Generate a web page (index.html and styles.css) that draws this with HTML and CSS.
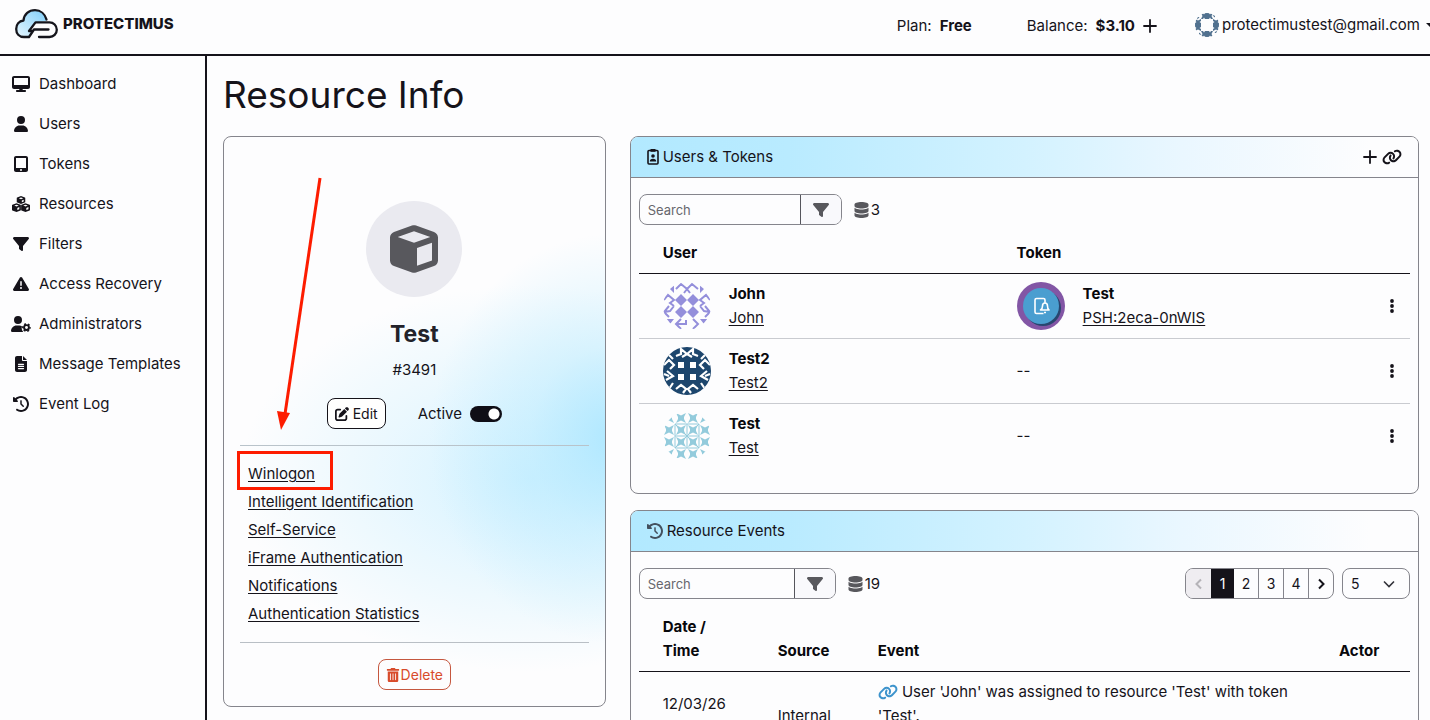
FILE: index.html
```html
<!DOCTYPE html>
<html lang="en">
<head>
<meta charset="utf-8">
<title>Resource Info</title>
<meta name="viewport" content="width=device-width, initial-scale=1">
<link rel="stylesheet" href="styles.css">
</head>
<body>
<svg class="sprite" aria-hidden="true">
  <symbol id="i-desktop" viewBox="0 0 576 512"><path d="M64 0C28.700 0 0 28.700 0 64V352c0 35.300 28.700 64 64 64H240l-10.700 32H160c-17.700 0-32 14.300-32 32s14.300 32 32 32H416c17.700 0 32-14.300 32-32s-14.300-32-32-32H346.700L336 416H512c35.300 0 64-28.700 64-64V64c0-35.300-28.700-64-64-64H64zM512 64V288H64V64H512z"/></symbol>
  <symbol id="i-user" viewBox="0 0 448 512"><path d="M224 256A128 128 0 1 0 224 0a128 128 0 1 0 0 256zm-45.700 48C79.800 304 0 383.800 0 482.300C0 498.700 13.300 512 29.700 512H418.300c16.400 0 29.700-13.300 29.700-29.700C448 383.800 368.200 304 269.700 304H178.300z"/></symbol>
  <symbol id="i-tablet" viewBox="0 0 448 512"><path d="M0 64C0 28.700 28.700 0 64 0H384c35.300 0 64 28.700 64 64V448c0 35.300-28.700 64-64 64H64c-35.300 0-64-28.700-64-64V64zM256 448a32 32 0 1 0 -64 0 32 32 0 1 0 64 0zM384 64H64V384H384V64z"/></symbol>
  <symbol id="i-cubes" viewBox="0 0 576 512">
    <path d="M288 0L412 44Q424 50 424 66V196L288 256 152 196V66Q152 50 164 44zM288 44L216 72 288 100 360 72zM314 146V200L374 174V120z"/>
    <path d="M144 230L272 276Q284 282 284 296V440Q284 454 272 460L144 512 12 460Q0 454 0 440V296Q0 282 12 276zM144 276L72 304 144 332 216 304zM170 380V446L234 420V354z"/>
    <path d="M432 230L564 276Q576 282 576 296V440Q576 454 564 460L432 512 304 460Q292 454 292 440V296Q292 282 304 276zM432 276L360 304 432 332 504 304zM458 380V446L526 420V354z"/>
  </symbol>
  <symbol id="i-cube" viewBox="0 0 512 512"><path d="M234.500 5.700c13.900-5 29.100-5 43.100 0l192 68.600C495 83.400 512 107.500 512 134.600V377.400c0 27-17 51.200-42.500 60.300l-192 68.600c-13.900 5-29.100 5-43.100 0l-192-68.600C17 428.600 0 404.500 0 377.400V134.600c0-27 17-51.200 42.500-60.300l192-68.600zM256 66L82.300 128 256 190l173.700-62L256 66zm32 368.600l160-57.100v-188L288 246.600v188z"/></symbol>
  <symbol id="i-filter" viewBox="0 0 512 512"><path d="M3.900 54.900C10.500 40.900 24.500 32 40 32H472c15.500 0 29.500 8.900 36.100 22.900s4.600 30.500-5.200 42.500L320 320.900V448c0 12.100-6.800 23.200-17.700 28.600s-23.800 4.300-33.500-3l-64-48c-8.100-6-12.800-15.500-12.800-25.600V320.900L9 97.300C-.7 85.400-2.800 68.800 3.900 54.900z"/></symbol>
  <symbol id="i-warning" viewBox="0 0 512 512"><path d="M256 32c14.200 0 27.300 7.500 34.500 19.800l216 368c7.300 12.400 7.300 27.700 .2 40.100S486.300 480 472 480H40c-14.300 0-27.600-7.700-34.700-20.100s-7-27.800 .2-40.100l216-368C228.700 39.500 241.800 32 256 32zm0 128c-13.300 0-24 10.700-24 24V296c0 13.300 10.700 24 24 24s24-10.700 24-24V184c0-13.300-10.700-24-24-24zm32 224a32 32 0 1 0 -64 0 32 32 0 1 0 64 0z"/></symbol>
  <symbol id="i-usergear" viewBox="0 0 640 512"><path d="M224 256A128 128 0 1 0 224 0a128 128 0 1 0 0 256zm-45.700 48C79.800 304 0 383.800 0 482.300C0 498.700 13.300 512 29.700 512H392C350 470 330 410 350 330 325 312 300 304 269.700 304z"/><circle cx="496" cy="370" r="78" fill="none" stroke="currentColor" stroke-width="62"/><circle cx="496" cy="370" r="118" fill="none" stroke="currentColor" stroke-width="48" stroke-dasharray="62 61.600" stroke-dashoffset="31"/></symbol>
  <symbol id="i-file" viewBox="0 0 384 512"><path d="M64 0C28.700 0 0 28.700 0 64V448c0 35.300 28.700 64 64 64H320c35.300 0 64-28.700 64-64V160H256c-17.700 0-32-14.300-32-32V0H64zM256 0V128H384zM112 244H272a20 20 0 0 1 0 40H112a20 20 0 0 1 0-40zm0 68H272a20 20 0 0 1 0 40H112a20 20 0 0 1 0-40zm0 68H272a20 20 0 0 1 0 40H112a20 20 0 0 1 0-40z"/></symbol>
  <symbol id="i-history" viewBox="0 0 512 512"><path d="M75 75L41 41C25.900 25.900 0 36.600 0 57.900V168c0 13.300 10.700 24 24 24H134.100c21.400 0 32.100-25.900 17-41l-30.800-30.800C155 85.500 203 64 256 64c106 0 192 86 192 192s-86 192-192 192c-40.800 0-78.600-12.700-109.700-34.400c-14.500-10.100-34.400-6.600-44.600 7.900s-6.600 34.400 7.900 44.600C151.200 495 201.700 512 256 512c141.400 0 256-114.600 256-256S397.400 0 256 0C185.300 0 121.300 28.700 75 75zm181 53c-13.300 0-24 10.700-24 24V256c0 6.400 2.500 12.500 7 17l72 72c9.400 9.400 24.600 9.400 33.900 0s9.400-24.600 0-33.900l-65-65V152c0-13.300-10.700-24-24-24z"/></symbol>
  <symbol id="i-database" viewBox="0 0 448 512"><path d="M448 80v48c0 44.200-100.300 80-224 80S0 172.200 0 128V80C0 35.800 100.300 0 224 0S448 35.800 448 80zM393.200 214.700c20.800-7.400 39.900-16.900 54.800-28.600V288c0 44.200-100.300 80-224 80S0 332.200 0 288V186.100c14.900 11.800 34 21.200 54.800 28.600C99.700 230.700 159.500 240 224 240s124.300-9.300 169.200-25.300zM0 346.100c14.900 11.800 34 21.200 54.800 28.600C99.700 390.700 159.500 400 224 400s124.300-9.300 169.200-25.300c20.800-7.400 39.900-16.900 54.800-28.600V432c0 44.200-100.300 80-224 80S0 476.200 0 432V346.100z"/></symbol>
  <symbol id="i-link" viewBox="0 0 640 512"><path d="M579.800 267.700c56.500-56.500 56.500-148 0-204.500c-50-50-128.800-56.500-186.300-15.400l-1.600 1.100c-14.400 10.300-17.700 30.300-7.400 44.600s30.300 17.700 44.600 7.400l1.600-1.100c32.100-22.900 76-19.300 103.800 8.600c31.500 31.500 31.500 82.500 0 114L422.300 334.800c-31.500 31.500-82.500 31.500-114 0c-27.900-27.900-31.500-71.800-8.600-103.800l1.100-1.600c10.300-14.400 6.900-34.400-7.400-44.600s-34.400-6.900-44.600 7.400l-1.100 1.600C206.500 251.200 213 330 263 380c56.500 56.500 148 56.500 204.500 0L579.800 267.700z"/><path d="M60.200 244.300c-56.500 56.500-56.500 148 0 204.500c50 50 128.800 56.500 186.300 15.400l1.600-1.100c14.400-10.300 17.700-30.300 7.400-44.600s-30.300-17.700-44.600-7.400l-1.600 1.100c-32.100 22.900-76 19.300-103.800-8.600C74 372 74 321 105.500 289.500L217.700 177.200c31.500-31.500 82.500-31.500 114 0c27.900 27.900 31.500 71.800 8.600 103.900l-1.100 1.600c-10.300 14.400-6.900 34.400 7.400 44.600s34.400 6.900 44.600-7.400l1.100-1.600C433.500 260.800 427 182 377 132c-56.500-56.500-148-56.500-204.500 0L60.200 244.300z"/></symbol>
  <symbol id="i-edit" viewBox="0 0 512 512"><path d="M471.600 21.700c-21.900-21.900-57.300-21.900-79.200 0L362.300 51.700l97.900 97.900 30.100-30.100c21.900-21.900 21.900-57.300 0-79.200L471.600 21.700zm-299.200 220c-6.100 6.100-10.800 13.600-13.500 21.900l-29.600 88.800c-2.900 8.600-.6 18.100 5.800 24.600s15.900 8.700 24.600 5.800l88.800-29.600c8.200-2.700 15.700-7.400 21.900-13.500L437.700 172.300 339.700 74.300 172.400 241.700zM96 64C43 64 0 107 0 160V416c0 53 43 96 96 96H352c53 0 96-43 96-96V320c0-17.700-14.300-32-32-32s-32 14.300-32 32v96c0 17.700-14.300 32-32 32H96c-17.700 0-32-14.300-32-32V160c0-17.700 14.300-32 32-32h96c17.700 0 32-14.300 32-32s-14.300-32-32-32H96z"/></symbol>
  <symbol id="i-trash" viewBox="0 0 448 512"><path d="M32 464a48 48 0 0 0 48 48h288a48 48 0 0 0 48-48V128H32zM304 208a16 16 0 0 1 32 0v224a16 16 0 0 1-32 0zm-96 0a16 16 0 0 1 32 0v224a16 16 0 0 1-32 0zm-96 0a16 16 0 0 1 32 0v224a16 16 0 0 1-32 0zM432 32H312l-9-19A24 24 0 0 0 281 0H167a24 24 0 0 0-22 13l-9 19H16A16 16 0 0 0 0 48v32a16 16 0 0 0 16 16h416a16 16 0 0 0 16-16V48a16 16 0 0 0-16-16z"/></symbol>
  <symbol id="i-plus" viewBox="0 0 14 14"><path d="M7 1v12M1 7h12" fill="none" stroke="currentColor" stroke-width="1.800" stroke-linecap="round"/></symbol>
  <symbol id="i-dots" viewBox="0 0 4 14"><circle cx="2" cy="2" r="1.900"/><circle cx="2" cy="7" r="1.900"/><circle cx="2" cy="12" r="1.900"/></symbol>
  <symbol id="i-badge" viewBox="0 0 12 16"><path d="M1 2.500V14q0 1 1 1h8q1 0 1-1V2.500q0-1-1-1H2q-1 0-1 1z" fill="none" stroke="currentColor" stroke-width="1.600"/><path d="M3.500 0h5v2.800h-5z"/><circle cx="6" cy="7" r="1.800"/><path d="M2.800 12.500q0-2.800 3.200-2.800t3.200 2.800z"/></symbol>
  <symbol id="i-prev" viewBox="0 0 8 12"><path d="M6 1.500L1.500 6 6 10.500" fill="none" stroke="currentColor" stroke-width="2"/></symbol>
  <symbol id="i-next" viewBox="0 0 8 12"><path d="M2 1.500L6.500 6 2 10.500" fill="none" stroke="currentColor" stroke-width="2"/></symbol>
</svg>

<header class="topbar">
  <a class="brand" href="#">
    <svg class="brand-mark" viewBox="0 0 43 30" aria-hidden="true">
      <defs><linearGradient id="cloud" x1="0" y1="1" x2="1" y2="0"><stop offset="0" stop-color="#e6f7ff"/><stop offset="1" stop-color="#7fcdf8"/></linearGradient></defs>
      <path d="M9 28C4 28 1.200 24.500 1.200 20 1.200 15.500 4 12 8.500 11.500 9 5 14 1.200 20 1.200 26 1.200 30.500 5.500 31.500 12L20 13.500 14 22 17 22.500 13.500 28z" fill="url(#cloud)"/>
      <path d="M31.500 10.500C30 5 25.500 1.200 20 1.200 14 1.200 9 5 8.500 11.500 4 12 1.200 15.500 1.200 20 1.200 24.500 4 28 9 28H14L19 20.500H33.500M24 28H34.500A7.300 7.300 0 0 0 34.500 13.400H20.500L14 22H18" fill="none" stroke="#15151c" stroke-width="2.300" stroke-linejoin="round" stroke-linecap="round"/>
    </svg>
    <span>PROTECTIMUS</span>
  </a>
  <div class="account">
    <div class="fact">Plan: <strong>Free</strong></div>
    <div class="fact balance">Balance: <strong>$3.10</strong><button class="bare" type="button" aria-label="Top up"><svg class="icon" viewBox="0 0 14 14"><use href="#i-plus"/></svg></button></div>
    <button class="bare profile" type="button">
      <svg class="avatar-small" viewBox="0 0 48 48" aria-hidden="true"><defs><clipPath id="round"><circle cx="24" cy="24" r="24"/></clipPath>
        <g id="knots"><path d="M12 0h4l2 3 2-3h8l2 3 2-3h4L33 6l3 6h-4l-2-3-2 3h-8l-2-3-2 3h-4l3-6z"/><path d="M4 8l5 0-4 5z"/></g></defs>
        <g clip-path="url(#round)" fill="#51718f"><use href="#knots"/><use href="#knots" transform="rotate(90 24 24)"/><use href="#knots" transform="rotate(180 24 24)"/><use href="#knots" transform="rotate(270 24 24)"/></g></svg>
      <span>protectimustest@gmail.com</span><span class="caret"></span>
    </button>
  </div>
</header>

<div class="shell">
  <nav class="sidebar" aria-label="Main">
    <a href="#"><svg class="icon"><use href="#i-desktop"/></svg>Dashboard</a>
    <a href="#"><svg class="icon"><use href="#i-user"/></svg>Users</a>
    <a href="#"><svg class="icon"><use href="#i-tablet"/></svg>Tokens</a>
    <a href="#"><svg class="icon"><use href="#i-cubes"/></svg>Resources</a>
    <a href="#"><svg class="icon"><use href="#i-filter"/></svg>Filters</a>
    <a href="#"><svg class="icon"><use href="#i-warning"/></svg>Access Recovery</a>
    <a href="#"><svg class="icon"><use href="#i-usergear"/></svg>Administrators</a>
    <a href="#"><svg class="icon"><use href="#i-file"/></svg>Message Templates</a>
    <a href="#"><svg class="icon"><use href="#i-history"/></svg>Event Log</a>
  </nav>

  <main class="main">
    <h1>Resource Info</h1>
    <div class="columns">
      <section class="card resource">
        <div class="emblem"><svg viewBox="0 0 512 512"><use href="#i-cube"/></svg></div>
        <h2>Test</h2>
        <p class="number">#3491</p>
        <div class="controls">
          <button class="btn" type="button"><svg class="icon"><use href="#i-edit"/></svg>Edit</button>
          <label class="switch">Active<input type="checkbox" role="switch" checked></label>
        </div>
        <ul class="links">
          <li class="marked"><a href="#">Winlogon</a></li>
          <li><a href="#">Intelligent Identification</a></li>
          <li><a href="#">Self-Service</a></li>
          <li><a href="#">iFrame Authentication</a></li>
          <li><a href="#">Notifications</a></li>
          <li><a href="#">Authentication Statistics</a></li>
        </ul>
        <button class="btn danger" type="button"><svg class="icon"><use href="#i-trash"/></svg>Delete</button>
        <svg class="arrow" viewBox="0 0 48 256" aria-hidden="true"><path d="M43 2L8 238" stroke="#fd1c00" stroke-width="3" fill="none"/><path d="M0 235L13 237 4 254z" fill="#fd1c00"/></svg>
      </section>

      <div class="stack">
        <section class="card">
          <header class="card-head">
            <svg class="icon head-badge"><use href="#i-badge"/></svg><h3>Users &amp; Tokens</h3>
            <div class="head-actions">
              <button class="bare" type="button" aria-label="Add"><svg class="icon" viewBox="0 0 14 14"><use href="#i-plus"/></svg></button>
              <button class="bare" type="button" aria-label="Assign"><svg class="icon wide"><use href="#i-link"/></svg></button>
            </div>
          </header>
          <div class="card-body">
            <div class="toolbar">
              <div class="search"><input type="text" placeholder="Search" aria-label="Search users"><button type="button" aria-label="Filter"><svg class="icon"><use href="#i-filter"/></svg></button></div>
              <span class="count"><svg class="icon"><use href="#i-database"/></svg>3</span>
            </div>
            <table class="users">
              <thead><tr><th>User</th><th>Token</th><th class="menu-col" aria-label="Actions"></th></tr></thead>
              <tbody>
                <tr>
                  <td><div class="entity">
                    <svg class="avatar" viewBox="0 0 48 48" aria-hidden="true">
                      <g clip-path="url(#round)" color="#948fdb" fill="#948fdb">
                        <path d="M18 12l6 6-6 6-6-6zM30 12l6 6-6 6-6-6zM18 24l6 6-6 6-6-6zM30 24l6 6-6 6-6-6z"/>
                        <path d="M13 7l5-5 6 5-3 4M24 7l5-5 6 5M24 7l3 4M1 18l4-5 6 5-4 3 4 3M47 18l-4-5-6 5 4 3-4 3M6 24l-5 6 5 5M1 30l6-1 4-5M42 24l5 6-5 5M47 30l-6-1-4-5M18 47l-5-5 5-5M13 42h10v-4M30 47l5-5-5-5" fill="none" stroke="currentColor" stroke-width="2"/>
                        <path d="M6 6l5-3v8zM42 6l-5-3v8zM3 37h8l-4 5zM45 37h-8l4 5z"/>
                      </g>
                    </svg>
                    <div><strong>John</strong><a href="#">John</a></div></div></td>
                  <td><div class="entity">
                    <svg class="avatar" viewBox="0 0 48 48" aria-hidden="true"><circle cx="24" cy="24" r="24" fill="#8256a5"/><circle cx="26" cy="26" r="18" fill="#28466f"/><circle cx="24" cy="24" r="18" fill="#4a9ed0"/><path d="M28 21v-3q0-1.500-1.500-1.500h-7Q18 16.500 18 18v12q0 1.500 1.500 1.500h7M23.500 28q2-1 2-4 0-3 2.500-3t2.500 3q0 3 1.500 4zM27 30.500h2" fill="none" stroke="#fff" stroke-width="1.600" stroke-linejoin="round"/></svg>
                    <div><strong>Test</strong><a href="#">PSH:2eca-0nWIS</a></div></div></td>
                  <td class="menu-col"><button class="bare" type="button" aria-label="Actions"><svg class="icon"><use href="#i-dots"/></svg></button></td>
                </tr>
                <tr>
                  <td><div class="entity">
                    <svg class="avatar" viewBox="0 0 48 48" aria-hidden="true"><circle cx="24" cy="24" r="24" fill="#1d466d"/>
                      <g clip-path="url(#round)"><path d="M15 15h6v6h-6zM27 15h6v6h-6zM15 27h6v6h-6zM27 27h6v6h-6z" fill="#fff"/>
                      <path d="M13 9l5-2V2l6 5 6-5v5l5 2M19 10l5-3 5 3M1 18l5-5 5 5-4 4M47 18l-5-5-5 5 4 4M4 24l6 5-7 4M1 27l5 2M44 24l-6 5 7 4M47 27l-5 2M13 42l5-4 5 4-3 4M35 42l-5-4-5 4 3 4M22 42h4M5 7l5 5M43 7l-5 5M6 42l4-6M42 42l-4-6" fill="none" stroke="#fff" stroke-width="2.200"/></g></svg>
                    <div><strong>Test2</strong><a href="#">Test2</a></div></div></td>
                  <td>--</td>
                  <td class="menu-col"><button class="bare" type="button" aria-label="Actions"><svg class="icon"><use href="#i-dots"/></svg></button></td>
                </tr>
                <tr>
                  <td><div class="entity">
                    <svg class="avatar" viewBox="0 0 48 48" aria-hidden="true">
                      <defs><pattern id="lace" width="12" height="12" patternUnits="userSpaceOnUse"><path fill="#93cbdc" d="M1 1l4 2h2l4-2-2 4v2l2 4-4-2H5l-4 2 2-4V5z"/><path fill="#fdfdfe" d="M4 0h4L6 4zM4 12h4L6 8z"/></pattern></defs>
                      <g clip-path="url(#round)"><path fill="url(#lace)" d="M0 0h48v48H0z"/><path d="M12 12h24v24H12zM24 12v24M12 24h24M12 12l24 24M36 12L12 36" fill="none" stroke="#93cbdc"/></g></svg>
                    <div><strong>Test</strong><a href="#">Test</a></div></div></td>
                  <td>--</td>
                  <td class="menu-col"><button class="bare" type="button" aria-label="Actions"><svg class="icon"><use href="#i-dots"/></svg></button></td>
                </tr>
              </tbody>
            </table>
          </div>
        </section>

        <section class="card">
          <header class="card-head">
            <svg class="icon head-history"><use href="#i-history"/></svg><h3>Resource Events</h3>
          </header>
          <div class="card-body">
            <div class="toolbar">
              <div class="search narrow"><input type="text" placeholder="Search" aria-label="Search events"><button type="button" aria-label="Filter"><svg class="icon"><use href="#i-filter"/></svg></button></div>
              <span class="count"><svg class="icon"><use href="#i-database"/></svg>19</span>
              <div class="pager">
                <button type="button" aria-label="Previous" disabled><svg class="icon"><use href="#i-prev"/></svg></button>
                <button type="button" class="current" aria-current="page">1</button>
                <button type="button">2</button>
                <button type="button">3</button>
                <button type="button">4</button>
                <button type="button" aria-label="Next"><svg class="icon"><use href="#i-next"/></svg></button>
              </div>
              <div class="page-size"><select aria-label="Rows per page"><option>5</option><option>10</option></select><svg viewBox="0 0 12 8" aria-hidden="true"><path d="M1 1.500l5 5 5-5" fill="none" stroke="#33333a" stroke-width="1.600"/></svg></div>
            </div>
            <table class="events">
              <thead><tr><th class="date-col">Date / Time</th><th class="source-col">Source</th><th>Event</th><th class="actor-col">Actor</th></tr></thead>
              <tbody><tr>
                <td class="date">12/03/26</td>
                <td>Internal</td>
                <td class="event"><svg class="icon wide"><use href="#i-link"/></svg> User 'John' was assigned to resource 'Test' with token 'Test'.</td>
                <td></td>
              </tr></tbody>
            </table>
          </div>
        </section>
      </div>
    </div>
  </main>
</div>
</body>
</html>
```
FILE: styles.css
```css
*, *::before, *::after { box-sizing: border-box; }

:root {
  --ink: #15131a;
  --line: #85858c;
  --soft: #c9cbd0;
}

body {
  margin: 0;
  height: 100vh;
  display: flex;
  flex-direction: column;
  overflow: hidden;
  background: #fdfdfe;
  color: var(--ink);
  font: 15px/24px Inter, "Liberation Sans", sans-serif;
}

a { color: inherit; text-underline-offset: 2px; }
button, input, select { font: inherit; color: inherit; }
h1, h2, h3, p, ul { margin: 0; padding: 0; }
strong, th { font-weight: 700; }

.sprite { display: none; }
.icon { width: 16px; height: 16px; fill: currentColor; fill-rule: evenodd; flex: none; }
.icon.wide { width: 20px; }
.bare { border: 0; background: none; padding: 0; display: inline-flex; align-items: center; cursor: pointer; }

.topbar {
  flex: none;
  display: flex;
  align-items: center;
  justify-content: space-between;
  height: 56px;
  padding-left: 15px;
  border-bottom: 2px solid var(--ink);
  white-space: nowrap;
}
.brand { display: flex; align-items: center; gap: 5px; height: 54px; padding-bottom: 6px; font-size: 15px; font-weight: 800; text-decoration: none; }
.brand-mark { width: 43px; height: 30px; }
.account { display: flex; align-items: center; padding-bottom: 2px; }
.fact { display: flex; gap: 8px; margin-right: 55px; }
.fact.balance { margin-right: 38px; }
.fact .icon { width: 14px; }
.profile { gap: 3px; height: 48px; padding-bottom: 3px; }
.avatar-small { width: 24px; height: 24px; }
.caret { margin-left: 3px; border: 4px solid transparent; border-top-color: var(--ink); border-bottom: 0; margin-right: -4px; }

.shell { flex: 1; display: flex; min-height: 0; }
.sidebar { flex: none; width: 207px; padding-top: 8px; border-right: 2px solid var(--ink); }
.sidebar a { display: flex; align-items: center; gap: 8px; height: 40px; padding-left: 11px; text-decoration: none; }
.sidebar .icon { width: 20px; }

.main { flex: 1; min-width: 0; padding: 15px 11px 0 16px; overflow: hidden; }
h1 { margin-bottom: 17px; font-size: 37px; line-height: 48px; font-weight: 400; }
.columns { display: grid; grid-template-columns: calc((100% - 48px) / 3) 1fr; gap: 24px; align-items: start; }
.stack { display: flex; flex-direction: column; gap: 16px; min-width: 0; }
.card { position: relative; border: 1px solid var(--line); border-radius: 8px; }

.resource {
  display: flex;
  flex-direction: column;
  align-items: center;
  padding: 64px 16px 16px;
  background:
    radial-gradient(ellipse 48% 36% at 102% 53%, #b0e8ff 0%, #b0e8ff66 45%, #b0e8ff00 100%),
    radial-gradient(ellipse 76% 34% at 80% 60%, #c8efffcc 0%, #d8f3ff88 50%, #e8f8ff00 100%);
}
.emblem { display: grid; place-items: center; width: 96px; height: 96px; border-radius: 50%; background: #eaeaf0; }
.emblem svg { width: 48px; height: 48px; fill: #58585d; fill-rule: evenodd; }
h2 { margin-top: 23px; font-size: 23px; line-height: 29px; font-weight: 700; color: #22222a; }
.number { margin: 9px 0 16px; }
.controls { display: flex; align-items: center; gap: 32px; }
.btn {
  display: inline-flex;
  align-items: center;
  gap: 4px;
  height: 31px;
  padding: 0 7px;
  border: 1px solid var(--ink);
  border-radius: 8px;
  background: #fffffe;
  font-size: 14px;
  cursor: pointer;
}
.btn .icon { width: 14px; height: 14px; }
.btn.danger { gap: 1px; border-color: #c5573f; background: none; color: #d84b2b; }
.switch { display: flex; align-items: center; gap: 8px; }
.switch input {
  appearance: none;
  width: 32px;
  height: 16px;
  margin: 0;
  border-radius: 8px;
  background: radial-gradient(circle at 24px 8px, #fff 5px, #0f0e16 6px);
}
.links {
  align-self: stretch;
  margin: 16px 0;
  padding: 14px 8px;
  border-top: 1px solid #b9c3ca;
  border-bottom: 1px solid #b9bfc5;
  list-style: none;
}
.links li { line-height: 28px; }
.marked { position: relative; }
.marked::before { content: ""; position: absolute; left: -11px; top: -9px; width: 96px; height: 39px; border: 3px solid #fd1c00; pointer-events: none; }
.arrow { position: absolute; left: 53px; top: 39px; width: 48px; height: 256px; pointer-events: none; }

.card-head {
  display: flex;
  align-items: center;
  height: 41px;
  padding: 0 16px;
  border-bottom: 1px solid var(--line);
  border-radius: 7px 7px 0 0;
  background: linear-gradient(90deg, #b2e9ff 0%, #b9ebff 20%, #d3f2ff 50%, #eaf7ff 70%, #fdfdfe 94%);
}
h3 { font-size: 15px; font-weight: 400; }
.head-badge { width: 12px; margin-right: 4px; }
.head-history { margin-right: 4px; color: #43505e; }
.head-actions { display: flex; gap: 5px; margin-left: auto; }
.head-actions .icon { width: 14px; }
.head-actions .icon.wide { width: 20px; }

.card-body { padding: 16px 8px 25px; }
.toolbar { display: flex; align-items: center; margin-bottom: 8px; }
.search { display: flex; width: 203px; height: 31px; border: 1px solid var(--line); border-radius: 8px; overflow: hidden; }
.search.narrow { width: 197px; }
.search input { flex: 1; min-width: 0; padding: 0 8px; border: 0; background: none; font-size: 13px; }
.search input::placeholder { color: #67676d; opacity: 1; }
.search button { display: grid; place-items: center; width: 41px; padding: 0; border: 0; border-left: 1px solid #55555c; background: #f9f9fc; color: #58585d; }
.count { display: flex; align-items: center; gap: 2px; margin-left: 12px; }
.count .icon { width: 15px; color: #58585d; }

.pager { display: flex; height: 31px; margin-left: auto; border: 1px solid var(--line); border-radius: 8px; overflow: hidden; }
.pager button { display: grid; place-items: center; width: 25px; padding: 0; border: 0; border-left: 1px solid var(--line); background: none; font-size: 14px; }
.pager button:first-child, .pager .current { border-left: 0; }
.pager button:disabled { background: #efedf1; color: #b5b3b8; }
.pager .current { width: 23px; background: var(--ink); color: #fff; }
.pager .current + button { border-left: 0; width: 24px; }
.pager .icon { width: 8px; height: 12px; }
.page-size { position: relative; margin-left: 8px; }
.page-size select { appearance: none; width: 68px; height: 31px; padding: 0 8px; border: 1px solid var(--line); border-radius: 8px; background: none; font-size: 14px; }
.page-size svg { position: absolute; right: 15px; top: 12px; width: 12px; height: 8px; pointer-events: none; }

table { width: 100%; border-collapse: separate; border-spacing: 0; table-layout: fixed; }
th, td { padding: 8px 0; text-align: left; }
th { border-bottom: 1px solid var(--ink); color: #08080c; vertical-align: bottom; }
th:first-child, td:first-child { padding-left: 24px; }
.users td { height: 65px; border-bottom: 1px solid var(--soft); }
.users tr:last-child td { height: 64px; border-bottom: 0; }
.users th:first-child { width: 49%; }
.menu-col { width: 20px; }
.menu-col .bare { display: flex; }
.menu-col .icon { width: 4px; height: 14px; }
.entity { display: flex; align-items: center; gap: 18px; }
.avatar { width: 48px; height: 48px; flex: none; }
.entity strong, .entity a { display: block; width: max-content; }
.entity strong { color: #08080c; }

.date-col { width: 139px; padding-right: 56px; }
.source-col { width: 100px; }
.actor-col { width: 71px; }
.events td { height: 88px; }
.events .date { padding-bottom: 32px; }
.events .event { padding-right: 40px; vertical-align: top; }
.event .icon { vertical-align: -3px; color: #3d93cc; }
```
